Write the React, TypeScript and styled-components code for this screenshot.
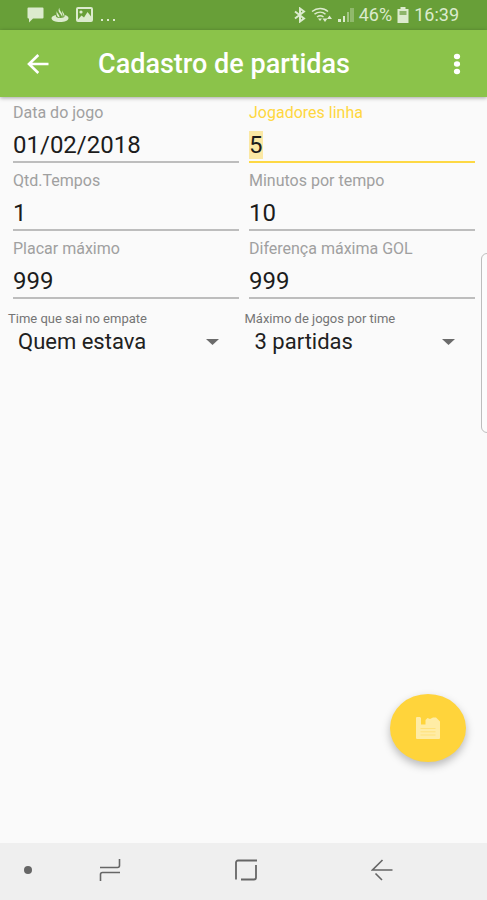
import React, { useEffect, useRef } from "react";
import styled, { createGlobalStyle } from "styled-components";

const GlobalStyle = createGlobalStyle`
  *, *::before, *::after { box-sizing: border-box; }
  body { margin: 0; background: #fafafa; font-family: Roboto, "Liberation Sans", sans-serif; }
`;

const Screen = styled.div`
  position: relative;
  display: flex;
  flex-direction: column;
  min-height: 100vh;
  overflow: hidden;
  background: #fafafa;
  color: #212121;
`;

const StatusBar = styled.div`
  display: flex;
  align-items: center;
  justify-content: space-between;
  height: 30px;
  padding: 0 28px 0 27px;
  background: #689f38;
  color: #dcebce;
`;

const StatusGroup = styled.div<{ $gap: number }>`
  display: flex;
  align-items: center;
  gap: ${({ $gap }) => $gap}px;
`;

const StatusText = styled.span`
  font-size: 18px;
  line-height: 30px;
`;

const AppBar = styled.header`
  z-index: 1;
  display: flex;
  align-items: center;
  height: 67px;
  padding: 0 14px 0 22px;
  background: #8bc34a;
  color: #fff;
  box-shadow: 0 1px 4px rgba(0, 0, 0, 0.35);
`;

const IconButton = styled.button`
  display: flex;
  align-items: center;
  justify-content: center;
  width: 32px;
  height: 48px;
  padding: 0;
  border: 0;
  background: none;
  color: inherit;
  cursor: pointer;
`;

const Title = styled.h1`
  flex: 1;
  margin: 0 0 0 44px;
  font-size: 27px;
  line-height: 32px;
  font-weight: 500;
  white-space: nowrap;
`;

const Form = styled.form`
  flex: 1;
  display: flex;
  flex-direction: column;
`;

const Fields = styled.div`
  display: grid;
  grid-template-columns: 1fr 1fr;
  column-gap: 10px;
  padding: 4px 12px 0 13px;
`;

const Field = styled.div<{ $active?: boolean }>`
  display: flex;
  flex-direction: column;
  min-width: 0;
  height: 68px;
  color: ${({ $active }) => ($active ? "#ffd740" : "#a0a0a0")};
`;

const FieldLabel = styled.label`
  font-size: 16px;
  line-height: 24px;
  white-space: nowrap;
`;

const FieldInput = styled.input<{ $active?: boolean }>`
  width: 100%;
  height: 38px;
  padding: 4px 0 0;
  border: 0;
  border-bottom: 2px solid ${({ $active }) => ($active ? "#fdd844" : "#bdbdbd")};
  border-radius: 0;
  outline: 0;
  background: none;
  color: #1c1c1c;
  font: 24px/28px Roboto, "Liberation Sans", sans-serif;

  &::selection {
    background: #fbe8a4;
    color: #1c1c1c;
  }
`;

const Spinners = styled.div`
  display: grid;
  grid-template-columns: 1fr 1fr;
  column-gap: 10px;
  padding: 6px 16px 0 8px;
`;

const Spinner = styled.div`
  display: flex;
  flex-direction: column;
  min-width: 0;
`;

const SpinnerLabel = styled.label`
  font-size: 13px;
  line-height: 16px;
  color: #757575;
  white-space: nowrap;
`;

const SelectBox = styled.div`
  display: grid;
  align-items: center;

  & > * {
    grid-area: 1 / 1;
  }

  & > svg {
    justify-self: end;
    margin-right: 16px;
    pointer-events: none;
  }
`;

const Select = styled.select`
  width: 100%;
  height: 30px;
  padding: 0 40px 0 10px;
  border: 0;
  outline: 0;
  appearance: none;
  background: none;
  color: #212121;
  font: 22px/30px Roboto, "Liberation Sans", sans-serif;
`;

const SaveButton = styled.button`
  display: flex;
  align-items: center;
  justify-content: center;
  align-self: flex-end;
  width: 76px;
  height: 68px;
  margin: auto 21px 81px 0;
  padding: 0;
  border: 0;
  border-radius: 50%;
  background: #ffd43b;
  box-shadow: 0 4px 8px rgba(0, 0, 0, 0.26);
  cursor: pointer;
`;

const EdgeHandle = styled.div`
  position: absolute;
  top: 253px;
  right: -6px;
  width: 12px;
  height: 180px;
  border: 1px solid #bdbdbd;
  border-radius: 8px;
  background: #fcfcfc;
`;

const NavBar = styled.nav`
  display: grid;
  grid-template-columns: 28px 1fr 1fr 1fr;
  align-items: center;
  justify-items: center;
  height: 57px;
  padding: 0 37px 4px 14px;
  background: #efefef;
  color: #666;
`;

const fields = [
  { id: "data", label: "Data do jogo", value: "01/02/2018" },
  { id: "jogadores", label: "Jogadores linha", value: "5", active: true },
  { id: "tempos", label: "Qtd.Tempos", value: "1" },
  { id: "minutos", label: "Minutos por tempo", value: "10" },
  { id: "placar", label: "Placar máximo", value: "999" },
  { id: "diferenca", label: "Diferença máxima GOL", value: "999" },
];

const spinners = [
  { id: "empate", label: "Time que sai no empate", value: "Quem estava" },
  { id: "maximo", label: "Máximo de jogos por time", value: "3 partidas" },
];

const ChatIcon = () => (
  <svg width="17" height="16" viewBox="0 0 17 16" fill="currentColor" aria-hidden="true">
    <path d="M1.5 0.5h14a1 1 0 0 1 1 1v9a1 1 0 0 1-1 1H6L2 15.5v-4h-.5a1 1 0 0 1-1-1v-9a1 1 0 0 1 1-1z" />
  </svg>
);

const FlameIcon = () => (
  <svg width="18" height="16" viewBox="0 0 18 16" fill="currentColor" aria-hidden="true">
    <path d="M5 8C2.500 8.600.5 9.500.5 11.200c0 2.200 3.800 3.800 8.500 3.800s8.500-1.600 8.500-3.800c0-1.600-1.500-2.500-3.800-3.100.2 1-.2 1.700-.8 2.200-2 1-5.800 1-7.300-.1C4.900 9.600 4.700 8.900 5 8z" />
    <path d="M8.500.8c-.3 1.500.3 2.300 1.200 3.700 1 1.500 2.300 3 1.500 5.500C10.600 7.900 9 6.700 8.100 5.200 7.300 3.700 7.400 2.200 8.500.8z" />
    <path d="M6 4c-.2 1.400.6 2.200 1.500 3.500.7 1 1.200 2 .9 3.200C6.400 10 4.600 6.800 6 4zM11.500 3.300c-.1 1 .5 1.900 1.200 2.900.8 1.200.8 2.500.2 3.700-.3-2.200-2.500-3.800-1.400-6.600z" />
  </svg>
);

const PictureIcon = () => (
  <svg width="17" height="16" viewBox="0 0 17 16" aria-hidden="true">
    <rect x="1" y="1" width="15" height="13" rx="1" fill="none" stroke="currentColor" strokeWidth="2" />
    <circle cx="5" cy="5" r="1.600" fill="currentColor" />
    <path d="M2 12.500l3.500-4 2.500 2L11.500 5l4 5v3H2z" fill="currentColor" />
  </svg>
);

const DotsIcon = () => (
  <svg width="16" height="16" viewBox="0 0 16 16" fill="currentColor" aria-hidden="true">
    <rect x="1" y="12" width="2" height="2" />
    <rect x="7" y="12" width="2" height="2" />
    <rect x="13" y="12" width="2" height="2" />
  </svg>
);

const BluetoothIcon = () => (
  <svg width="12" height="16" viewBox="0 0 12 16" fill="none" stroke="currentColor" strokeWidth="2" aria-hidden="true">
    <path d="M1 4.500l9 7-4 3V1.500l4 3-9 7" />
  </svg>
);

const WifiIcon = () => (
  <svg width="22" height="16" viewBox="0 0 22 16" fill="none" stroke="currentColor" strokeWidth="1.500" aria-hidden="true">
    <path d="M1 4.500c5-4 11.500-4 16 0M3.500 7.200c3.500-2.700 8-2.700 11 0M6 10c2-1.600 4.500-1.600 6.500 0" />
    <path d="M7 11.500h4l-2 2.500z" fill="currentColor" stroke="none" />
    <path d="M11.500 11.500h5L14 15zM16 12l2.500-3.500L21 12z" fill="currentColor" stroke="none" />
  </svg>
);

const SignalIcon = () => (
  <svg width="16" height="14" viewBox="0 0 16 14" fill="currentColor" aria-hidden="true">
    <rect x="0" y="11" width="3" height="3" />
    <rect x="5" y="8" width="2" height="6" />
    <rect x="9" y="4" width="2" height="10" opacity="0.500" />
    <rect x="12" y="0" width="4" height="14" opacity="0.350" />
  </svg>
);

const BatteryIcon = () => (
  <svg width="12" height="16" viewBox="0 0 12 16" aria-hidden="true">
    <path d="M3.500 0h5v2h3v14H.5V2h3z" fill="currentColor" />
    <path d="M2.500 4h7v4h-7z" fill="#8db56a" />
  </svg>
);

const BackIcon = () => (
  <svg width="24" height="22" viewBox="0 0 24 22" fill="none" stroke="currentColor" strokeWidth="2.600" aria-hidden="true">
    <path d="M22.500 11H3M12.300 2L3 11l9.300 9" />
  </svg>
);

const MoreIcon = () => (
  <svg width="8" height="22" viewBox="0 0 8 22" fill="currentColor" aria-hidden="true">
    <ellipse cx="4" cy="3.500" rx="3.100" ry="2.700" />
    <ellipse cx="4" cy="11" rx="3.100" ry="2.700" />
    <ellipse cx="4" cy="18.500" rx="3.100" ry="2.700" />
  </svg>
);

const ArrowDownIcon = () => (
  <svg width="13" height="6" viewBox="0 0 13 6" fill="#6b6b6b" aria-hidden="true">
    <path d="M0 0h13L6.500 6z" />
  </svg>
);

const SaveIcon = () => (
  <svg width="26" height="24" viewBox="0 0 26 24" aria-hidden="true">
    <path
      d="M2 1h3l1 1v6.500h4.500V4l2-2 2.500 1L18 1.500h3l4 4V22a1 1 0 0 1-1 1H2a1 1 0 0 1-1-1V2a1 1 0 0 1 1-1z"
      fill="#ffeca5"
    />
    <path d="M5.500 12.500h15M5.500 15.800h15M5.500 19h15" stroke="#ffe17a" strokeWidth="1" />
  </svg>
);

const NavDotIcon = () => (
  <svg width="8" height="8" viewBox="0 0 8 8" fill="currentColor" aria-hidden="true">
    <circle cx="4" cy="4" r="4" />
  </svg>
);

const RecentsIcon = () => (
  <svg width="22" height="22" viewBox="0 0 22 22" fill="none" stroke="currentColor" strokeWidth="1.600" aria-hidden="true">
    <path d="M1 8.500h17.500a2 2 0 0 0 2-2V0M21 13.500H3.500a2 2 0 0 0-2 2V22" />
  </svg>
);

const HomeIcon = () => (
  <svg width="24" height="22" viewBox="0 0 24 22" fill="none" stroke="currentColor" strokeWidth="1.800" aria-hidden="true">
    <path d="M2 20.500V3.500a2 2 0 0 1 2-2h19M22 6v12.500a2 2 0 0 1-2 2H7" />
  </svg>
);

const NavBackIcon = () => (
  <svg width="22" height="22" viewBox="0 0 22 22" fill="none" stroke="currentColor" strokeWidth="1.600" aria-hidden="true">
    <path d="M21.500 11H1.500L11.500 1M4.500 14.500l6.500 6.500" />
  </svg>
);

export default function App() {
  const activeInput = useRef<HTMLInputElement>(null);

  useEffect(() => {
    activeInput.current?.focus();
    activeInput.current?.select();
  }, []);

  return (
    <>
      <GlobalStyle />
      <Screen>
        <StatusBar>
          <StatusGroup $gap={7}>
            <ChatIcon />
            <FlameIcon />
            <PictureIcon />
            <DotsIcon />
          </StatusGroup>
          <StatusGroup $gap={5}>
            <BluetoothIcon />
            <WifiIcon />
            <SignalIcon />
            <StatusText>46%</StatusText>
            <BatteryIcon />
            <StatusText>16:39</StatusText>
          </StatusGroup>
        </StatusBar>
        <AppBar>
          <IconButton type="button" aria-label="Voltar">
            <BackIcon />
          </IconButton>
          <Title>Cadastro de partidas</Title>
          <IconButton type="button" aria-label="Mais opções">
            <MoreIcon />
          </IconButton>
        </AppBar>
        <Form onSubmit={(event) => event.preventDefault()}>
          <Fields>
            {fields.map(({ id, label, value, active }) => (
              <Field key={id} $active={active}>
                <FieldLabel htmlFor={id}>{label}</FieldLabel>
                <FieldInput
                  id={id}
                  defaultValue={value}
                  $active={active}
                  ref={active ? activeInput : undefined}
                />
              </Field>
            ))}
          </Fields>
          <Spinners>
            {spinners.map(({ id, label, value }) => (
              <Spinner key={id}>
                <SpinnerLabel htmlFor={id}>{label}</SpinnerLabel>
                <SelectBox>
                  <Select id={id} defaultValue={value}>
                    <option>{value}</option>
                  </Select>
                  <ArrowDownIcon />
                </SelectBox>
              </Spinner>
            ))}
          </Spinners>
          <SaveButton type="submit" aria-label="Salvar">
            <SaveIcon />
          </SaveButton>
        </Form>
        <EdgeHandle />
        <NavBar>
          <IconButton type="button" aria-label="Ocultar barra">
            <NavDotIcon />
          </IconButton>
          <IconButton type="button" aria-label="Recentes">
            <RecentsIcon />
          </IconButton>
          <IconButton type="button" aria-label="Início">
            <HomeIcon />
          </IconButton>
          <IconButton type="button" aria-label="Voltar ao anterior">
            <NavBackIcon />
          </IconButton>
        </NavBar>
      </Screen>
    </>
  );
}
